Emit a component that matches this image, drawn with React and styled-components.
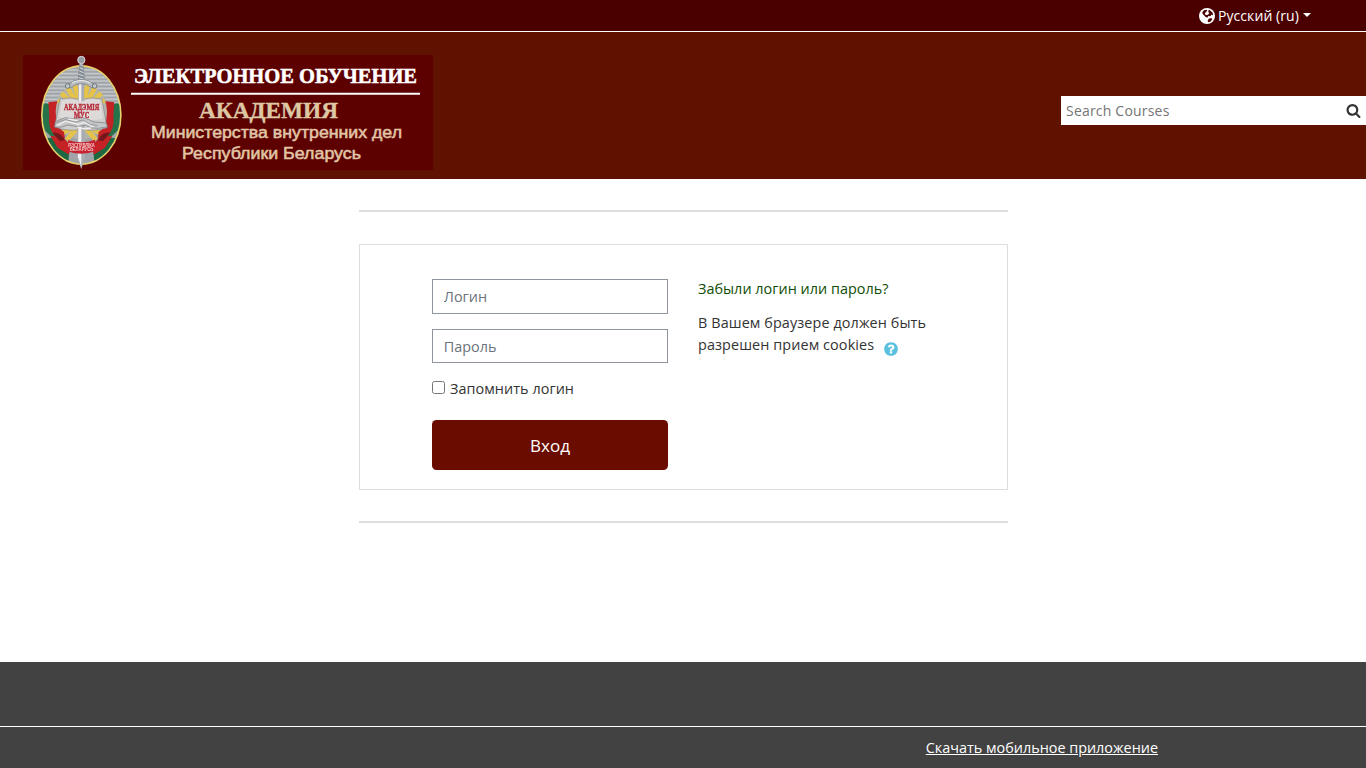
import React from "react";
import styled, { createGlobalStyle } from 'styled-components';

const GlobalStyle = createGlobalStyle`
  * {
    box-sizing: border-box;
  }
  html {
    font-size: 14.4px;
  }
  body {
    margin: 0;
    color: #333;
    background: #fff;
    font-family: "Open Sans", "Noto Sans", sans-serif;
    font-size: 14.4px;
    line-height: 1.5;
  }
`;

const Page = styled.div`
  display: flex;
  flex-direction: column;
  height: 100vh;
  overflow: hidden;
`;

const TopBar = styled.div`
  display: flex;
  flex: none;
  justify-content: flex-end;
  height: 32px;
  padding-right: 55px;
  background: #4b0000;
  border-bottom: 1px solid #fff;
`;

const LanguageLink = styled.a`
  display: flex;
  align-items: center;
  height: 31px;
  color: #fff;
  font-size: 14px;
  letter-spacing: 0.08px;
  white-space: nowrap;

  .globe {
    margin: 1px 3px 0 0;
  }
  .caret {
    margin: -2px 0 0 4px;
    border: 4px solid transparent;
    border-top-color: #fff;
    border-bottom: 0;
  }
`;

const Header = styled.header`
  display: flex;
  flex: none;
  justify-content: space-between;
  align-items: flex-start;
  height: 147px;
  padding: 23px 0 0 23px;
  background: #601200;
`;

const LogoImage = styled.svg`
  display: block;
  width: 410px;
  height: 115px;
`;

const SearchBox = styled.form`
  display: flex;
  align-items: center;
  width: 305px;
  height: 29px;
  margin: 41px 0 0;
  padding: 0 5px;
  background: #fff;

  input {
    flex: 1;
    min-width: 0;
    padding: 0;
    border: 0;
    outline: 0;
    font: inherit;
    font-size: 14px;
    letter-spacing: 0.2px;
  }
  input::placeholder {
    color: #757575;
  }
  svg {
    margin-top: -1px;
  }
`;

const Main = styled.main`
  display: flex;
  flex: 1;
  flex-direction: column;
  width: 649px;
  margin: 0 auto;
  padding-top: 31px;
  position: relative;
  left: 0.5px;
`;

const Divider = styled.div`
  height: 2px;
  background: #dedede;
`;

const Card = styled.section`
  display: grid;
  grid-template-columns: 236px 236px;
  column-gap: 30px;
  height: 246px;
  margin: 32px 0 31px;
  padding: 34px 0 0 72px;
  border: 1px solid #dedede;
`;

const LoginForm = styled.form`
  display: flex;
  flex-direction: column;
`;

const TextInput = styled.input`
  width: 100%;
  height: ${props => props.$height}px;
  margin: 0 0 15px;
  padding: 0 10.8px;
  border: 1px solid #8f959e;
  border-radius: 0;
  font: inherit;

  &::placeholder {
    color: #6a737b;
    opacity: 1;
  }
`;

const Remember = styled.label`
  display: flex;
  align-items: flex-start;
  height: 22px;
  margin-bottom: 20px;
  letter-spacing: 0.06px;

  input {
    width: 13px;
    height: 13px;
    margin: 3px 5px 0 0;
  }
`;

const LoginButton = styled.button`
  height: 50px;
  padding: 2px 0 0;
  border: 0;
  border-radius: 4.5px;
  color: #fff;
  background: #6b0c00;
  font: inherit;
  font-size: 17px;
`;

const Help = styled.div`
  white-space: nowrap;

  a {
    display: block;
    height: 22px;
    margin: -1px 0 12px;
    color: #0f4d05;
    letter-spacing: 0.03px;
  }
  p {
    margin: 0;
    line-height: 22px;
    letter-spacing: 0.1px;
  }
  svg {
    margin-left: 9px;
    vertical-align: -7px;
  }
`;

const Footer = styled.footer`
  flex: none;
  height: 106px;
  padding-top: 64px;
  background: #424242;
`;

const FooterRow = styled.div`
  display: flex;
  justify-content: flex-end;
  height: 42px;
  padding: 10px 208px 0 0;
  border-top: 1px solid #fff;

  a {
    color: #fff;
    text-decoration: underline;
  }
`;

function Emblem() {
  return (
    <g transform="translate(-8 -7) scale(.33333)">
      <filter id="soft">
        <feGaussianBlur stdDeviation="1" />
      </filter>
      <clipPath id="oval">
        <ellipse cx="199" cy="201" rx="116" ry="145" />
      </clipPath>
      <g filter="url(#soft)">
        <ellipse cx="199" cy="201" rx="121" ry="150" fill="#e6d36c" />
        <ellipse cx="199" cy="201" rx="116" ry="145" fill="#a0a3a8" />
        <g clipPath="url(#oval)">
          {[66, 77, 88, 99, 110, 121, 132, 143, 154, 165, 176, 187, 198].map(y => (
            <path key={y} d={`M80 ${y}H320`} stroke="#c4c7ca" strokeWidth="5" />
          ))}
          <ellipse cx="199" cy="190" rx="80" ry="84" fill="#b3b3ac" />
          <g stroke="#e5c349" strokeWidth="14">
            <path d="M199 190L129 157M199 190L139 136M199 190L158 120M199 190L180 112M199 190L218 112M199 190L240 120M199 190L259 136M199 190L269 157" />
            <path d="M199 226L137 258M199 226L155 276M199 226L243 276M199 226L261 258" />
          </g>
          <path d="M78 172Q98 157 108 177L110 225Q118 252 140 260L124 280L84 242Z" fill="#26734a" />
          <path d="M320 172Q300 157 290 177L288 225Q280 252 258 260L274 280L314 242Z" fill="#26734a" />
          <path d="M100 163L127 160Q119 185 124 214Q127 240 147 252L150 272L120 264Q98 240 103 205Z" fill="#c52126" />
          <path d="M298 163L271 160Q279 185 274 214Q271 240 251 252L248 272L278 264Q300 240 295 205Z" fill="#c52126" />
          <path d="M88 272Q132 262 164 288L160 346L120 324Z M310 272Q266 262 234 288L238 346L278 324Z" fill="#1b6840" />
          <path d="M106 263L143 268L166 291L162 320L128 299Z M292 263L255 268L232 291L236 320L270 299Z" fill="#c52126" />
          <path d="M112 254Q136 250 150 277L134 279Z M286 254Q262 250 248 277L264 279Z" fill="#75191e" />
        </g>
        <path d="M135 153Q175 145 197 157Q223 145 261 153L276 239Q234 252 199 244Q158 252 119 237Z" fill="#cecdcc" stroke="#85888b" strokeWidth="2" />
        <path d="M190 103H207L210 328L199 364L186 328Z" fill="#a9adb2" />
        <path d="M192 107H199V356L189 328Z" fill="#f0eeee" />
        <path d="M193 47H205L210 99H188Z" fill="#858b92" />
        <path d="M194 49L204 54M194 59L205 64M193 69L206 74M192 79L206 84M191 89L207 94" stroke="#d6dce0" strokeWidth="3" />
        <circle cx="199" cy="36" r="11" fill="#999ca3" stroke="#d4d5da" strokeWidth="3" />
        <path d="M159 110Q178 94 199 94Q220 94 239 110L231 120Q213 105 199 107Q184 105 167 120Z" fill="#b5babf" stroke="#6f7881" strokeWidth="2" />
        <path d="M171 105Q199 90 227 105" fill="none" stroke="#f0f0ed" strokeWidth="3" />
        <circle cx="158" cy="114" r="7" fill="#c2c9ce" stroke="#6c757b" strokeWidth="3" />
        <circle cx="239" cy="114" r="7" fill="#c2c9ce" stroke="#6c757b" strokeWidth="3" />
        <path d="M141 158Q175 151 197 161Q223 150 255 158L264 211Q229 221 199 211Q170 219 132 208Z" fill="#dedad9" />
        <path d="M121 221L151 209L179 213L193 207L215 212L237 222L273 225L278 236L251 241L230 240L211 232L187 236L159 231L137 238L119 237Z" fill="#c4c6c7" stroke="#73777c" strokeWidth="2" />
        <path d="M125 233L153 219L189 229L209 223L236 237M160 213L190 219M187 237L209 243L228 240" fill="none" stroke="#f0eeed" strokeWidth="4" />
        <path d="M123 225L151 215L181 222L204 216L226 229L247 233" fill="none" stroke="#7b7d80" strokeWidth="2" />
        <g fill="#b52a37" stroke="#b52a37" strokeWidth="1.2" fontFamily="Liberation Serif, serif" fontWeight="700">
          <text x="147" y="187" fontSize="26" textLength="106" lengthAdjust="spacingAndGlyphs">АКАДЭМІЯ</text>
          <text x="177" y="211" fontSize="26" textLength="46" lengthAdjust="spacingAndGlyphs">МУС</text>
        </g>
        <path d="M160 276Q199 290 240 275L243 309Q199 325 156 310Z" fill="#c72330" />
        <g fill="#f7cccb" fontFamily="Liberation Sans, sans-serif" fontWeight="700">
          <text x="160" y="297" fontSize="14" textLength="79" lengthAdjust="spacingAndGlyphs">РЭСПУБЛІКА</text>
          <text x="164" y="310" fontSize="14" textLength="71" lengthAdjust="spacingAndGlyphs">БЕЛАРУСЬ</text>
        </g>
      </g>
    </g>
  );
}

function Logo() {
  return (
    <LogoImage viewBox="0 0 410 115">
      <rect width="410" height="115" fill="#5d0000" />
      <Emblem />
      <path d="M108 38.7H397" stroke="#fff" strokeWidth="2" />
      <g fontFamily="Liberation Serif, serif" fontWeight="700">
        <text x="111" y="27.7" fill="#fff" stroke="#fff" strokeWidth=".5" fontSize="20.5" textLength="283" lengthAdjust="spacingAndGlyphs">ЭЛЕКТРОННОЕ ОБУЧЕНИЕ</text>
        <text x="176" y="62.7" fill="#dec8a4" stroke="#dec8a4" strokeWidth=".35" fontSize="24" textLength="139" lengthAdjust="spacingAndGlyphs">АКАДЕМИЯ</text>
      </g>
      <g fill="#e0c5a6" stroke="#e0c5a6" strokeWidth=".55" fontFamily="Liberation Sans, sans-serif" fontSize="17">
        <text x="128" y="83.2" textLength="251" lengthAdjust="spacingAndGlyphs">Министерства внутренних дел</text>
        <text x="159" y="104" textLength="179" lengthAdjust="spacingAndGlyphs">Республики Беларусь</text>
      </g>
    </LogoImage>
  );
}

function GlobeIcon() {
  return (
    <svg className="globe" width="16" height="16" viewBox="0 0 48 48">
      <circle cx="24" cy="24" r="24" fill="#fff" />
      <path d="M15 7L23 5L25 9L20 12L24 16L29 13L27 8L32 6L41 14L42 22L37 20L34 25L28 24L25 29L19 26L15 22L11 18L10 13Z" fill="#4b0000" />
      <path d="M20 13L26 11L31 15L27 20L21 21L17 18Z" fill="#fff" />
      <path d="M29 32L37 30L40 34L34 41L27 43L26 38Z" fill="#4b0000" />
    </svg>
  );
}

function SearchIcon() {
  return (
    <svg width="15" height="15" viewBox="0 0 1792 1792" fill="#333">
      <path d="M1216 832q0-185-131.5-316.5t-316.5-131.5-316.5 131.5-131.5 316.5 131.5 316.5 316.5 131.5 316.5-131.5 131.5-316.5zm512 832q0 52-38 90t-90 38q-54 0-90-38l-343-342q-179 124-399 124-143 0-273.5-55.5t-225-150-150-225-55.5-273.5 55.5-273.5 150-225 225-150 273.5-55.5 273.5 55.5 225 150 150 225 55.5 273.5q0 220-124 399l343 343q37 37 37 90z" />
    </svg>
  );
}

function HelpIcon() {
  return (
    <svg width="16" height="16" viewBox="0 0 1792 1792" fill="#5bc0de">
      <path d="M1024 1376v-192q0-14-9-23t-23-9h-192q-14 0-23 9t-9 23v192q0 14 9 23t23 9h192q14 0 23-9t9-23zm256-672q0-88-55.5-163t-138.5-116-170-41q-243 0-371 213-15 24 8 42l132 100q7 6 19 6 16 0 25-12 53-68 86-92 34-24 86-24 48 0 85.5 26t37.5 59q0 38-20 61t-68 45q-63 28-115.5 86.5t-52.5 125.5v36q0 14 9 23t23 9h192q14 0 23-9t9-23q0-19 21.5-49.5t54.5-49.5q32-18 49-28.5t46-35 44.5-48 28-60.5 12.5-81zm384 192q0 209-103 385.5t-279.5 279.5-385.5 103-385.5-103-279.5-279.5-103-385.5 103-385.5 279.5-279.5 385.5-103 385.5 103 279.5 279.5 103 385.5z" />
    </svg>
  );
}

export default function App() {
  return (
    <Page>
      <GlobalStyle />
      <TopBar>
        <LanguageLink>
          <GlobeIcon />
          Русский (ru)
          <span className="caret" />
        </LanguageLink>
      </TopBar>
      <Header>
        <Logo />
        <SearchBox>
          <input type="text" placeholder="Search Courses" />
          <SearchIcon />
        </SearchBox>
      </Header>
      <Main>
        <Divider />
        <Card>
          <LoginForm>
            <TextInput $height={35} type="text" placeholder="Логин" />
            <TextInput $height={34} type="password" placeholder="Пароль" />
            <Remember>
              <input type="checkbox" />
              Запомнить логин
            </Remember>
            <LoginButton type="button">Вход</LoginButton>
          </LoginForm>
          <Help>
            <a>Забыли логин или пароль?</a>
            <p>
              В Вашем браузере должен быть<br />
              разрешен прием cookies
              <HelpIcon />
            </p>
          </Help>
        </Card>
        <Divider />
      </Main>
      <Footer>
        <FooterRow>
          <a>Скачать мобильное приложение</a>
        </FooterRow>
      </Footer>
    </Page>
  );
}
